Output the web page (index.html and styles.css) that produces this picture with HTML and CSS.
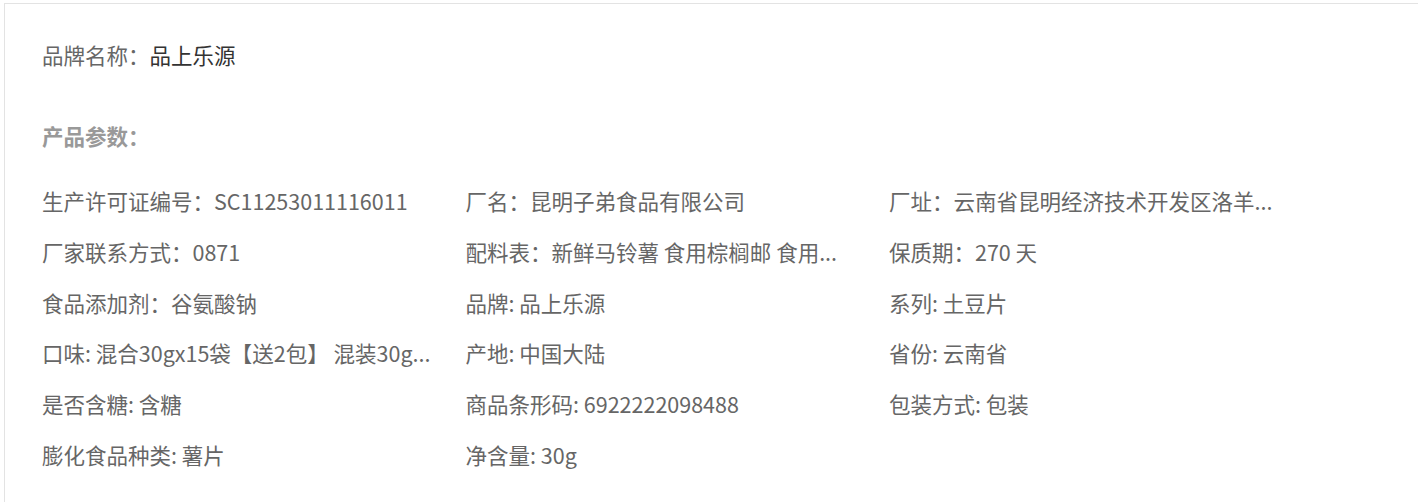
FILE: index.html
```html
<!DOCTYPE html>
<html lang="zh-CN">
<head>
    <meta charset="UTF-8">
    <meta name="viewport" content="width=device-width, initial-scale=1.0">
    <title>商品详情</title>
    <link rel="stylesheet" href="styles.css">
</head>
<body>
    <div class="detail-panel">
        <div class="brand-line">品牌名称：<span class="brand-name">品上乐源</span></div>

        <div class="params-title">产品参数：</div>

        <ul class="params-list">
            <li title="生产许可证编号：SC11253011116011">生产许可证编号：SC11253011116011</li>
            <li title="厂名：昆明子弟食品有限公司">厂名：昆明子弟食品有限公司</li>
            <li title="厂址：云南省昆明经济技术开发区洛羊街道">厂址：云南省昆明经济技术开发区洛羊...</li>
            <li title="厂家联系方式：0871">厂家联系方式：0871</li>
            <li title="配料表：新鲜马铃薯 食用棕榈邮 食用油">配料表：新鲜马铃薯 食用棕榈邮 食用...</li>
            <li title="保质期：270 天">保质期：270 天</li>
            <li>食品添加剂：谷氨酸钠</li>
            <li>品牌: 品上乐源</li>
            <li>系列: 土豆片</li>
            <li title="口味: 混合30gx15袋【送2包】 混装30gx30袋">口味: 混合30gx15袋【送2包】 混装30g...</li>
            <li>产地: 中国大陆</li>
            <li>省份: 云南省</li>
            <li>是否含糖: 含糖</li>
            <li>商品条形码: 6922222098488</li>
            <li>包装方式: 包装</li>
            <li>膨化食品种类: 薯片</li>
            <li>净含量: 30g</li>
        </ul>
    </div>
</body>
</html>
```

FILE: styles.css
```css
body {
    margin: 0;
    padding: 3px 0 0 4px;
    font-family: "Noto Sans CJK SC", "Microsoft YaHei", sans-serif;
    font-size: 21.5px;
    color: #666;
    background: #fff;
}

.detail-panel {
    border-top: 1px solid #e3e3e3;
    border-left: 1px solid #e3e3e3;
    padding: 36px 0 0 37px;
    height: 499px;
    box-sizing: border-box;
}

.brand-line {
    line-height: 30px;
}

.brand-name {
    color: #333;
}

.params-title {
    margin-top: 51px;
    line-height: 30px;
    font-weight: bold;
    color: #999;
}

.params-list {
    list-style: none;
    margin: 35px 0 0 0;
    padding: 0;
    display: grid;
    grid-template-columns: repeat(3, 423.5px);
    row-gap: 20.8px;
}

.params-list li {
    width: 396px;
    line-height: 30px;
    white-space: nowrap;
    overflow: hidden;
    text-overflow: ellipsis;
}
```
